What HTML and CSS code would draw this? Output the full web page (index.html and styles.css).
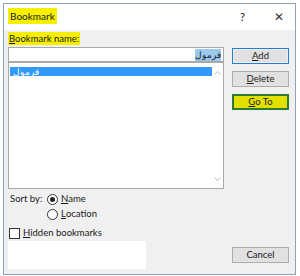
FILE: index.html
```html
<!DOCTYPE html>
<html lang="en">

<head>
    <meta charset="UTF-8">
    <title>Bookmark</title>
    <link rel="stylesheet" href="styles.css">
</head>

<body>
    <div class="frame">
        <div class="titlebar">
            <span class="title mark">Bookmark</span>
            <span class="help">?</span>
            <span class="close">&#x2715;</span>
        </div>
        <div class="content">
            <div class="left">
                <div class="label-row"><span class="mark"><u>B</u>ookmark name:</span></div>
                <div class="name-input"><span class="sel" dir="rtl">فرمول</span></div>
                <div class="list">
                    <div class="list-items">
                        <div class="item selected" dir="rtl">فرمول</div>
                    </div>
                    <div class="scrollbar">
                        <svg width="7" height="5" viewBox="0 0 7 5"><path d="M0.5 4.5 L3.5 1.5 L6.5 4.5" fill="none" stroke="#b5b5b5" stroke-width="1"/></svg>
                        <svg width="7" height="5" viewBox="0 0 7 5"><path d="M0.5 0.5 L3.5 3.5 L6.5 0.5" fill="none" stroke="#b5b5b5" stroke-width="1"/></svg>
                    </div>
                </div>
                <div class="sort">
                    <span class="sort-label">Sort by:</span>
                    <div class="radios">
                        <label class="radio"><span class="dot on"></span><u>N</u>ame</label>
                        <label class="radio"><span class="dot"></span><u>L</u>ocation</label>
                    </div>
                </div>
                <label class="check"><span class="box"></span><u>H</u>idden bookmarks</label>
                <div class="blank"></div>
            </div>
            <div class="right">
                <div class="btn default"><u>A</u>dd</div>
                <div class="btn"><u>D</u>elete</div>
                <div class="btn goto"><u>G</u>o To</div>
                <div class="btn cancel">Cancel</div>
            </div>
        </div>
    </div>
</body>

</html>
```

FILE: styles.css
```css
body {
    margin: 0;
    padding: 0;
    background-color: #fff;
    font-family: Lato, "Noto Sans", sans-serif;
    font-size: 9.5px;
    color: #1a1a1a;
}

.frame {
    margin: 3px 4px 1px 3px;
    height: 270px;
    border: 1px solid #8fa3b6;
    display: flex;
    flex-direction: column;
}

.mark {
    background-color: #f6f000;
}

.titlebar {
    height: 26px;
    background-color: #fff;
    display: flex;
    align-items: center;
    padding: 0 4px 2px 4px;
    box-sizing: border-box;
}

.title {
    font-size: 10px;
    padding: 0 2px;
    line-height: 16px;
}

.help {
    margin-left: auto;
    margin-right: 29px;
    font-size: 11px;
}

.close {
    margin-right: 7px;
    font-size: 12px;
    color: #333;
}

.content {
    flex: 1;
    background-color: #f0f0f0;
    display: flex;
    padding: 2px 4px 0 4px;
}

.left {
    width: 216px;
    display: flex;
    flex-direction: column;
}

.label-row {
    height: 14px;
    line-height: 14px;
}

.label-row .mark {
    padding: 1px 1px;
}

.name-input {
    height: 13px;
    margin-top: 1px;
    background-color: #fff;
    border: 1px solid #a8a8a8;
    display: flex;
    justify-content: flex-end;
    align-items: center;
    padding-right: 2px;
}

.name-input .sel {
    background-color: #99c9ef;
    line-height: 12px;
    font-family: "Noto Sans", sans-serif;
    font-size: 9px;
}

.list {
    height: 125px;
    background-color: #fff;
    border: 1px solid #a8a8a8;
    display: flex;
}

.list-items {
    flex: 1;
    padding: 4px 0 0 1px;
}

.item {
    font-family: "Noto Sans", sans-serif;
    font-size: 9px;
    line-height: 9px;
    height: 9px;
    padding-left: 3px;
}

.item.selected {
    background-color: #3399ff;
    color: #fff;
    display: flex;
    justify-content: flex-end;
}

.scrollbar {
    width: 11px;
    display: flex;
    flex-direction: column;
    justify-content: space-between;
    align-items: center;
    padding: 7px 0 6px 0;
}

.sort {
    display: flex;
    margin-top: 4px;
}

.sort-label {
    width: 37px;
    padding-left: 2px;
    line-height: 12px;
}

.radios {
    display: flex;
    flex-direction: column;
    gap: 3px;
}

.radio,
.check {
    display: flex;
    align-items: center;
    line-height: 12px;
}

.dot {
    width: 9px;
    height: 9px;
    border: 1px solid #333;
    border-radius: 50%;
    background-color: #fff;
    margin-right: 3px;
    position: relative;
}

.dot.on::after {
    content: "";
    position: absolute;
    left: 2px;
    top: 2px;
    width: 5px;
    height: 5px;
    border-radius: 50%;
    background-color: #222;
}

.check {
    margin-top: 7px;
    padding-left: 1px;
}

.box {
    width: 9px;
    height: 9px;
    border: 1px solid #333;
    background-color: #fff;
    margin-right: 3px;
}

.blank {
    width: 138px;
    height: 28px;
    margin-top: 2px;
    background-color: #fff;
}

.right {
    width: 57px;
    margin-left: 8px;
    display: flex;
    flex-direction: column;
    padding-top: 16px;
}

.btn {
    height: 14px;
    line-height: 14px;
    text-align: center;
    background-color: #e1e1e1;
    border: 1px solid #adadad;
    margin-bottom: 7px;
    color: #222;
}

.btn.default {
    border: 1px solid #2b7bd0;
    box-shadow: inset 0 0 0 1px #e8f0f8;
}

.btn.goto {
    background-color: #e3e000;
    border: 1px solid #2d7a33;
    box-shadow: inset 0 0 0 1px #2d7a33;
}

.btn.cancel {
    margin-top: auto;
    margin-bottom: 11px;
}
```
